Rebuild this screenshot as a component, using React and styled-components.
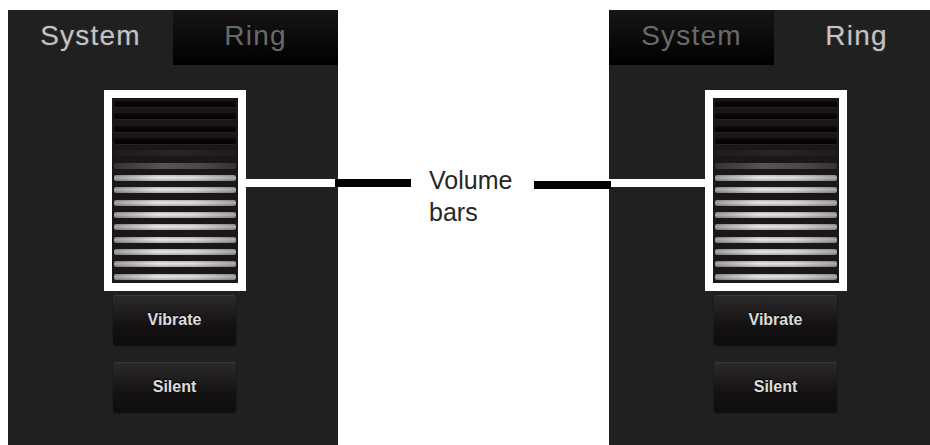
import React from 'react';
import styled, { createGlobalStyle, css } from 'styled-components';

const GlobalStyle = createGlobalStyle`
  html, body {
    margin: 0;
    padding: 0;
    background: #fff;
  }
`;

const Page = styled.div`
  display: flex;
  width: 930px;
  height: 445px;
  padding: 10px 0 0 8px;
  box-sizing: border-box;
  overflow: hidden;
  font-family: 'Liberation Sans', Arial, sans-serif;
`;

const Panel = styled.div`
  flex-shrink: 0;
  display: flex;
  flex-direction: column;
  width: 330px;
  height: 435px;
  background: #202020;
`;

const TabBar = styled.div`
  display: grid;
  grid-template-columns: 165px 165px;
  height: 55px;
`;

const Tab = styled.div`
  text-align: center;
  font-size: 28px;
  line-height: 51px;
  letter-spacing: 1.2px;
  ${({ active }) => (active
    ? css`
      background: #202020;
      color: #c4c4c4;
      text-shadow: 0 0 2px rgba(255, 255, 255, 0.2);
    `
    : css`
      background: linear-gradient(#161616, #000);
      color: #6a6a6a;
    `)}
`;

const Body = styled.div`
  display: flex;
  flex-direction: column;
  padding-top: 25px;
`;

const VolumeRow = styled.div`
  display: flex;
  align-items: flex-start;
  ${({ side }) => side === 'left' && 'padding-left: 96px;'}
`;

const Leader = styled.div`
  height: 8px;
  margin-top: 89px;
  background: #fff;
  ${({ grow }) => (grow ? 'flex: 1;' : 'width: 96px;')}
`;

const Frame = styled.div`
  flex-shrink: 0;
  width: 122px;
  height: 179px;
  border: 8px solid #fff;
  padding: 3px 2px;
  display: flex;
  flex-direction: column;
  justify-content: space-between;
  background: #1b1717;
`;

const barLevels = {
  off: css`
    background: linear-gradient(#0b0909, #030202);
    box-shadow: 0 1px 0 rgba(255, 255, 255, 0.05);
  `,
  faint: css`
    background: linear-gradient(90deg, #1d1b1b, #272525 50%, #1d1b1b);
  `,
  dim: css`
    background: linear-gradient(90deg, #353333, #555 40%, #4a4a4a 70%, #353333);
  `,
  on: css`
    background:
      linear-gradient(rgba(0, 0, 0, 0.2), rgba(255, 255, 255, 0.05) 45%, rgba(0, 0, 0, 0.25)),
      linear-gradient(90deg, #a0a0a0, #e8e8e8 35%, #dedede 65%, #a6a6a6);
  `,
};

const Bar = styled.div`
  height: 6px;
  border-radius: 2px;
  ${({ level }) => barLevels[level]}
`;

const Buttons = styled.div`
  display: flex;
  flex-direction: column;
  gap: 17px;
  width: 123px;
  margin: 4px 0 0 105px;
`;

const Button = styled.div`
  height: 50px;
  display: flex;
  align-items: center;
  justify-content: center;
  border-radius: 3px;
  background: linear-gradient(#2c2a2a, #141212 60%, #0e0c0c);
  box-shadow: inset 0 1px 0 rgba(255, 255, 255, 0.08), 0 1px 2px rgba(0, 0, 0, 0.6);
  color: #dcdcdc;
  font-size: 16px;
  font-weight: bold;
  text-shadow: 0 -1px 0 #000;
`;

const Annotation = styled.div`
  flex-shrink: 0;
  display: flex;
  align-items: flex-start;
  width: 271px;
  padding-top: 154px;
`;

const Pointer = styled.div`
  position: relative;
  z-index: 1;
  height: 8px;
  background: #000;
  ${({ side }) => (side === 'left'
    ? 'width: 76px; margin: 15px 0 0 -3px;'
    : 'width: 77px; margin: 17px -2px 0 auto;')}
`;

const Label = styled.div`
  margin-left: 18px;
  color: #262626;
  font-size: 25px;
  line-height: 32px;
`;

const levels = ['off', 'off', 'off', 'off', 'faint', 'dim', 'on', 'on', 'on', 'on', 'on', 'on', 'on', 'on', 'on'];

function VolumePanel({ active, side }) {
  const frame = (
    <Frame>
      {levels.map((level, i) => <Bar key={i} level={level} />)}
    </Frame>
  );
  return (
    <Panel>
      <TabBar>
        <Tab active={active === 'System'}>System</Tab>
        <Tab active={active === 'Ring'}>Ring</Tab>
      </TabBar>
      <Body>
        <VolumeRow side={side}>
          {side === 'left' ? (
            <>
              {frame}
              <Leader grow />
            </>
          ) : (
            <>
              <Leader />
              {frame}
            </>
          )}
        </VolumeRow>
        <Buttons>
          <Button>Vibrate</Button>
          <Button>Silent</Button>
        </Buttons>
      </Body>
    </Panel>
  );
}

export default function App() {
  return (
    <>
      <GlobalStyle />
      <Page>
        <VolumePanel active="System" side="left" />
        <Annotation>
          <Pointer side="left" />
          <Label>
            Volume
            <br />
            bars
          </Label>
          <Pointer side="right" />
        </Annotation>
        <VolumePanel active="Ring" side="right" />
      </Page>
    </>
  );
}
